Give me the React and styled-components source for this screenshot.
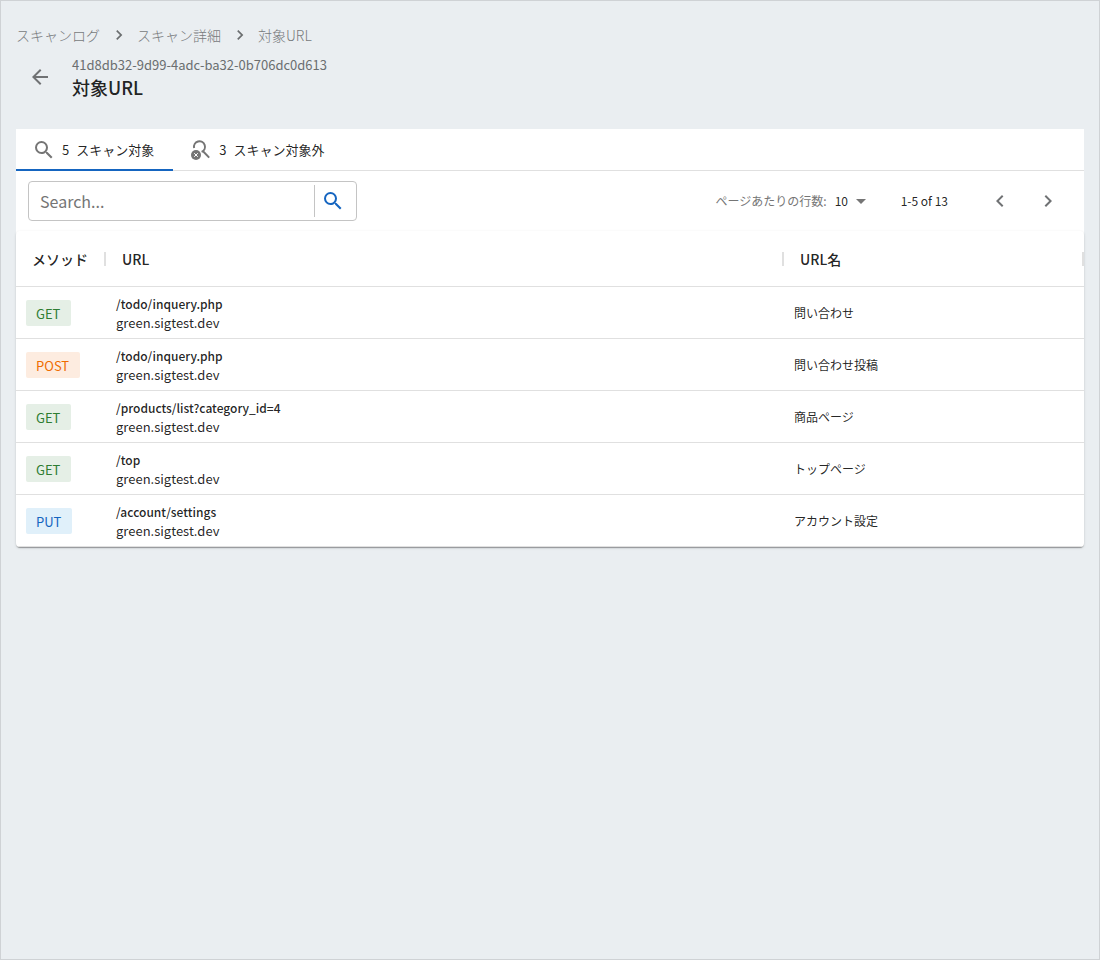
import React from "react";
import styled, { createGlobalStyle, css } from "styled-components";
import {
  MdArrowBack,
  MdArrowDropDown,
  MdChevronLeft,
  MdChevronRight,
  MdNavigateNext,
  MdSearch,
} from "react-icons/md";

const GlobalStyle = createGlobalStyle`
  *, *::before, *::after { box-sizing: border-box; }
  body {
    margin: 0;
    background: #eaeef1;
    color: rgba(0, 0, 0, 0.87);
    font-family: "Noto Sans CJK JP", "Noto Sans", sans-serif;
    font-size: 14px;
  }
  button, input, select { font: inherit; color: inherit; }
`;

const Page = styled.div`
  min-height: 100vh;
  padding: 15px;
  border: 1px solid #cfd2d5;
`;

const Breadcrumbs = styled.nav`
  ol {
    display: flex;
    align-items: center;
    margin: 0;
    padding: 7px 0 0;
    list-style: none;
  }
  li {
    display: flex;
    align-items: center;
    height: 24px;
  }
  svg {
    margin: 0 8px 0 9px;
    width: 20px;
    height: 20px;
    color: #6b6e70;
  }
`;

const Crumb = styled.a`
  color: #777a7c;
  font-weight: 300;
  text-decoration: none;
`;

const Header = styled.header`
  display: flex;
  align-items: center;
  gap: 8px;
  padding: 6px 0 28px;
`;

const IconButton = styled.button`
  display: inline-flex;
  align-items: center;
  justify-content: center;
  width: ${(p) => p.$size || 48}px;
  height: ${(p) => p.$size || 48}px;
  padding: 0;
  border: 0;
  border-radius: 50%;
  background: none;
  color: ${(p) => p.$color || "#707274"};
  cursor: pointer;
`;

const ScanId = styled.div`
  color: #6b6e70;
  font-size: 13px;
  line-height: 20px;
`;

const Title = styled.h1`
  margin: 0;
  font-size: 18px;
  font-weight: 500;
  line-height: 25px;
`;

const Panel = styled.main`
  border-radius: 0 0 4px 4px;
  background: #fff;
`;

const Tabs = styled.div`
  display: flex;
  height: 42px;
  border-bottom: 1px solid #e0e0e0;
`;

const Tab = styled.button`
  display: flex;
  align-items: center;
  height: 42px;
  padding: 2px 19px 0 16px;
  border: 0;
  border-bottom: 2px solid ${(p) => (p.$active ? "#1565c0" : "transparent")};
  background: none;
  font-size: 13px;
  line-height: 20px;
  cursor: pointer;
  svg { margin-right: 6px; color: #757575; }
`;

const Count = styled.span`
  margin-right: 7px;
`;

const Toolbar = styled.div`
  display: flex;
  align-items: center;
  justify-content: space-between;
  padding: 6px 12px;
`;

const SearchBox = styled.form`
  display: flex;
  align-items: center;
  width: 329px;
  height: 40px;
  border: 1px solid #c4c4c4;
  border-radius: 4px;
`;

const SearchInput = styled.input`
  flex: 1;
  min-width: 0;
  height: 38px;
  padding: 0 11px;
  border: 0;
  outline: 0;
  background: none;
  font-size: 16px;
  &::placeholder { color: #757575; opacity: 1; }
`;

const SearchAction = styled.div`
  display: flex;
  align-items: center;
  justify-content: center;
  width: 42px;
  height: 32px;
  padding-right: 5px;
  border-left: 1px solid #c4c4c4;
`;

const Pagination = styled.div`
  display: flex;
  align-items: center;
  font-size: 12px;
  line-height: 18px;
`;

const RowsLabel = styled.label`
  color: #757575;
`;

const SelectWrap = styled.span`
  display: flex;
  align-items: center;
  margin: 0 28px 0 8px;
  svg {
    margin-left: -2px;
    color: #757575;
    pointer-events: none;
  }
`;

const RowsSelect = styled.select`
  appearance: none;
  width: 16px;
  padding: 0;
  border: 0;
  background: none;
`;

const Range = styled.span`
  margin-right: 28px;
`;

const TableCard = styled.div`
  border-radius: 4px;
  background: #fff;
  overflow: hidden;
  box-shadow: 0 2px 1px -1px rgba(0, 0, 0, 0.2), 0 1px 1px rgba(0, 0, 0, 0.14),
    0 1px 3px rgba(0, 0, 0, 0.12);
`;

const Table = styled.table`
  width: 100%;
  border-collapse: separate;
  border-spacing: 0;
  table-layout: fixed;
`;

const Column = styled.col`
  width: ${(p) => p.$width};
`;

const HeadCell = styled.th`
  height: 56px;
  padding: 0;
  border-bottom: 1px solid #e0e0e0;
  font-weight: 500;
  text-align: left;
`;

const HeadContent = styled.div`
  display: flex;
  align-items: center;
  justify-content: space-between;
  padding-left: 16px;
  &::after {
    content: "";
    width: 2px;
    height: 14px;
    background: #e0e0e0;
  }
`;

const Cell = styled.td`
  height: 52px;
  padding: 0 10px;
  border-bottom: 1px solid #e0e0e0;
  font-size: 12px;
  line-height: 19px;
`;

const tones = {
  GET: css`background: #e5efe6; color: #2e7d32;`,
  POST: css`background: #fdece0; color: #ef6c00;`,
  PUT: css`background: #e0f0fa; color: #1565c0;`,
};

const Method = styled.span`
  display: inline-block;
  height: 26px;
  padding: 0 11px 0 10px;
  border-radius: 2px;
  font-size: 13px;
  line-height: 27px;
  ${(p) => tones[p.$method]}
`;

const Path = styled.div`
  font-weight: 500;
`;

const Host = styled.div`
  font-size: 13px;
`;

function SearchExcludedIcon() {
  return (
    <svg width="24" height="24" viewBox="0 0 24 24" fill="none" aria-hidden="true">
      <path d="M5.1 10A5.5 5.5 0 1 1 12.6 13.9M13.8 13l6.4 6.6" stroke="currentColor" strokeWidth="2" />
      <circle cx="7" cy="17" r="5" fill="currentColor" />
      <path d="M5.2 15.2l3.6 3.6M8.8 15.2l-3.6 3.6" stroke="#fff" strokeWidth="1" />
    </svg>
  );
}

const rows = [
  ["GET", "/todo/inquery.php", "問い合わせ"],
  ["POST", "/todo/inquery.php", "問い合わせ投稿"],
  ["GET", "/products/list?category_id=4", "商品ページ"],
  ["GET", "/top", "トップページ"],
  ["PUT", "/account/settings", "アカウント設定"],
];

export default function App() {
  return (
    <>
      <GlobalStyle />
      <Page>
        <Breadcrumbs aria-label="breadcrumb">
          <ol>
            <li><Crumb href="#logs">スキャンログ</Crumb><MdNavigateNext /></li>
            <li><Crumb href="#detail">スキャン詳細</Crumb><MdNavigateNext /></li>
            <li><Crumb href="#urls" aria-current="page">対象URL</Crumb></li>
          </ol>
        </Breadcrumbs>
        <Header>
          <IconButton type="button" aria-label="戻る"><MdArrowBack size={24} /></IconButton>
          <div>
            <ScanId>41d8db32-9d99-4adc-ba32-0b706dc0d613</ScanId>
            <Title>対象URL</Title>
          </div>
        </Header>
        <Panel>
          <Tabs role="tablist">
            <Tab type="button" role="tab" aria-selected="true" $active>
              <MdSearch size={24} /><Count>5</Count>スキャン対象
            </Tab>
            <Tab type="button" role="tab" aria-selected="false">
              <SearchExcludedIcon /><Count>3</Count>スキャン対象外
            </Tab>
          </Tabs>
          <Toolbar>
            <SearchBox role="search" onSubmit={(e) => e.preventDefault()}>
              <SearchInput type="text" placeholder="Search..." aria-label="Search" />
              <SearchAction>
                <IconButton type="submit" aria-label="検索" $size={32} $color="#1565c0">
                  <MdSearch size={24} />
                </IconButton>
              </SearchAction>
            </SearchBox>
            <Pagination>
              <RowsLabel htmlFor="rows">ページあたりの行数:</RowsLabel>
              <SelectWrap>
                <RowsSelect id="rows" defaultValue="10">
                  <option>10</option>
                  <option>25</option>
                  <option>50</option>
                </RowsSelect>
                <MdArrowDropDown size={24} />
              </SelectWrap>
              <Range>1-5 of 13</Range>
              <IconButton type="button" aria-label="前のページ"><MdChevronLeft size={24} /></IconButton>
              <IconButton type="button" aria-label="次のページ"><MdChevronRight size={24} /></IconButton>
            </Pagination>
          </Toolbar>
          <TableCard>
            <Table>
              <colgroup>
                <Column $width="90px" />
                <Column />
                <Column $width="300px" />
              </colgroup>
              <thead>
                <tr>
                  <HeadCell scope="col"><HeadContent>メソッド</HeadContent></HeadCell>
                  <HeadCell scope="col"><HeadContent>URL</HeadContent></HeadCell>
                  <HeadCell scope="col"><HeadContent>URL名</HeadContent></HeadCell>
                </tr>
              </thead>
              <tbody>
                {rows.map(([method, path, name], i) => (
                  <tr key={i}>
                    <Cell><Method $method={method}>{method}</Method></Cell>
                    <Cell>
                      <Path>{path}</Path>
                      <Host>green.sigtest.dev</Host>
                    </Cell>
                    <Cell>{name}</Cell>
                  </tr>
                ))}
              </tbody>
            </Table>
          </TableCard>
        </Panel>
      </Page>
    </>
  );
}
